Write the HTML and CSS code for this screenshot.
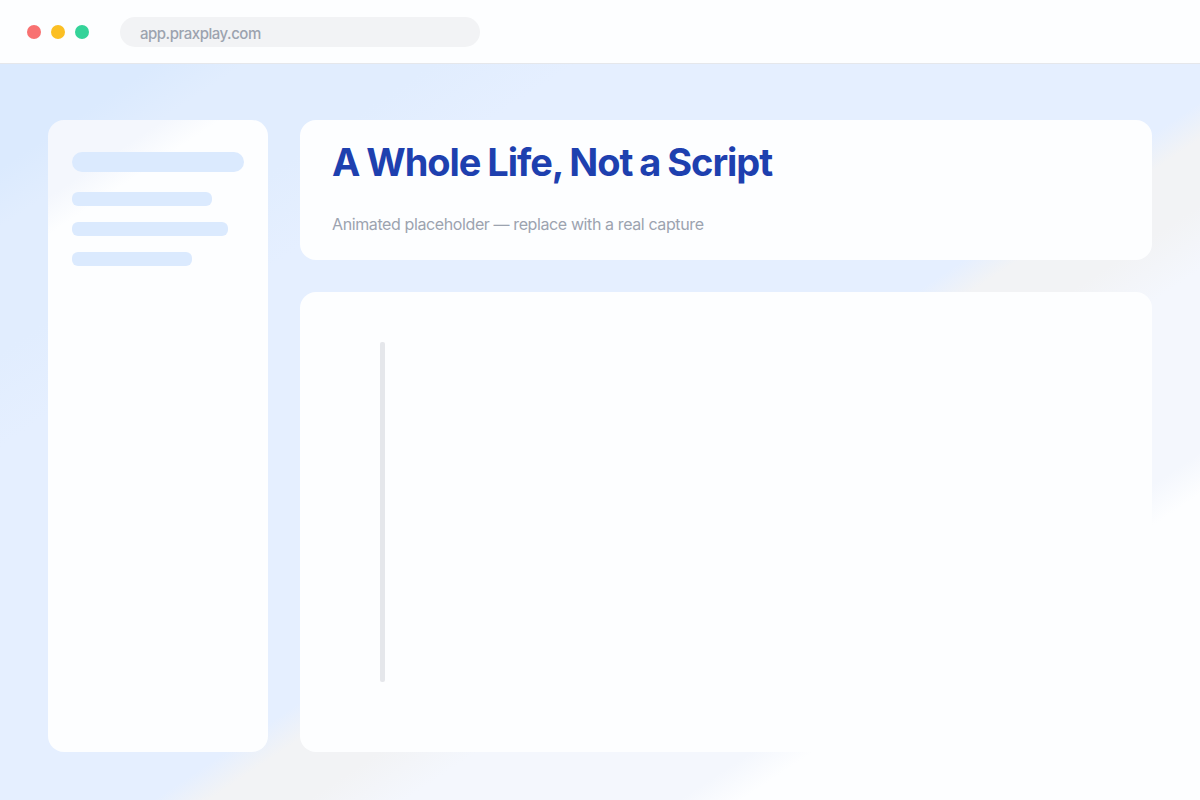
FILE: index.html
```html
<!DOCTYPE html>
<html lang="en">
<head>
<meta charset="utf-8">
<title>A Whole Life, Not a Script</title>
<link rel="stylesheet" href="styles.css">
</head>
<body>
<header class="browser-bar">
  <div class="lights">
    <span class="light red"></span>
    <span class="light amber"></span>
    <span class="light green"></span>
  </div>
  <div class="address"><span class="url">app.praxplay.com</span></div>
</header>
<div class="layout">
  <aside class="sidebar">
    <div class="line heading"></div>
    <div class="line medium"></div>
    <div class="line long"></div>
    <div class="line short"></div>
  </aside>
  <main class="main">
    <section class="card hero">
      <h1 class="title">A Whole Life, Not a Script</h1>
      <p class="subtitle">Animated placeholder — replace with a real capture</p>
    </section>
    <section class="card stage">
      <div class="caret"></div>
    </section>
  </main>
</div>
</body>
</html>
```
FILE: styles.css
```css
* {
  box-sizing: border-box;
}

body {
  margin: 0;
  width: 1200px;
  height: 800px;
  overflow: hidden;
  display: flex;
  flex-direction: column;
  font-family: Inter, "Liberation Sans", sans-serif;
  background: linear-gradient(to bottom right,
    #dbeafe 10.5%, #e1edfe 14.2%,
    #e1edfe 22%, #e5efff 28%,
    #e5efff 56.4%, #f2f3f5 58.7%,
    #f2f3f5 62.8%, #f4f7fd 66.9%,
    #f4f7fd 78.3%, #fdfeff 80.9%);
}

.browser-bar {
  flex: none;
  height: 64px;
  display: flex;
  align-items: center;
  gap: 31px;
  padding-left: 27px;
  background: #fdfeff;
  border-bottom: 1px solid #e5e7eb;
}

.lights {
  display: flex;
  gap: 10px;
}

.light {
  width: 14px;
  height: 14px;
  border-radius: 50%;
}

.red { background: #f87171; }
.amber { background: #fbbf24; }
.green { background: #34d399; }

.address {
  width: 360px;
  height: 30px;
  padding-left: 20px;
  border-radius: 15px;
  background: #f2f3f5;
}

.url {
  font-size: 15px;
  line-height: 33px;
  display: block;
  font-weight: 500;
  letter-spacing: -0.48px;
  color: #9ca3af;
}

.layout {
  flex: 1;
  display: flex;
  gap: 32px;
  padding: 56px 48px 48px;
}

.sidebar {
  width: 220px;
  padding: 32px 24px;
  border-radius: 16px;
  background: linear-gradient(146.3deg, #f4f7fd 0, #f4f7fd 64px, #fdfeff 96px);
}

.line {
  height: 14px;
  margin-bottom: 16px;
  border-radius: 6px;
  background: #dbeafe;
}

.heading {
  width: 172px;
  height: 20px;
  margin-bottom: 20px;
  border-radius: 10px;
}

.medium { width: 140px; }
.long { width: 156px; }
.short { width: 120px; }

.main {
  flex: 1;
  display: flex;
  flex-direction: column;
  gap: 32px;
}

.card {
  border-radius: 16px;
  background: #fdfeff;
}

.hero {
  height: 140px;
  padding: 18px 32px;
}

.title {
  margin: 0;
  font-size: 38px;
  line-height: 48px;
  font-weight: 700;
  letter-spacing: -1.07px;
  word-spacing: -0.9px;
  color: #1e40af;
}

.subtitle {
  margin: 26px 0 0;
  font-size: 16px;
  line-height: 24px;
  letter-spacing: -0.39px;
  color: #9ca3af;
}

.stage {
  flex: 1;
  padding: 50px 80px;
}

.caret {
  width: 5px;
  height: 340px;
  border-radius: 2px;
  background: #e5e7eb;
}
```
